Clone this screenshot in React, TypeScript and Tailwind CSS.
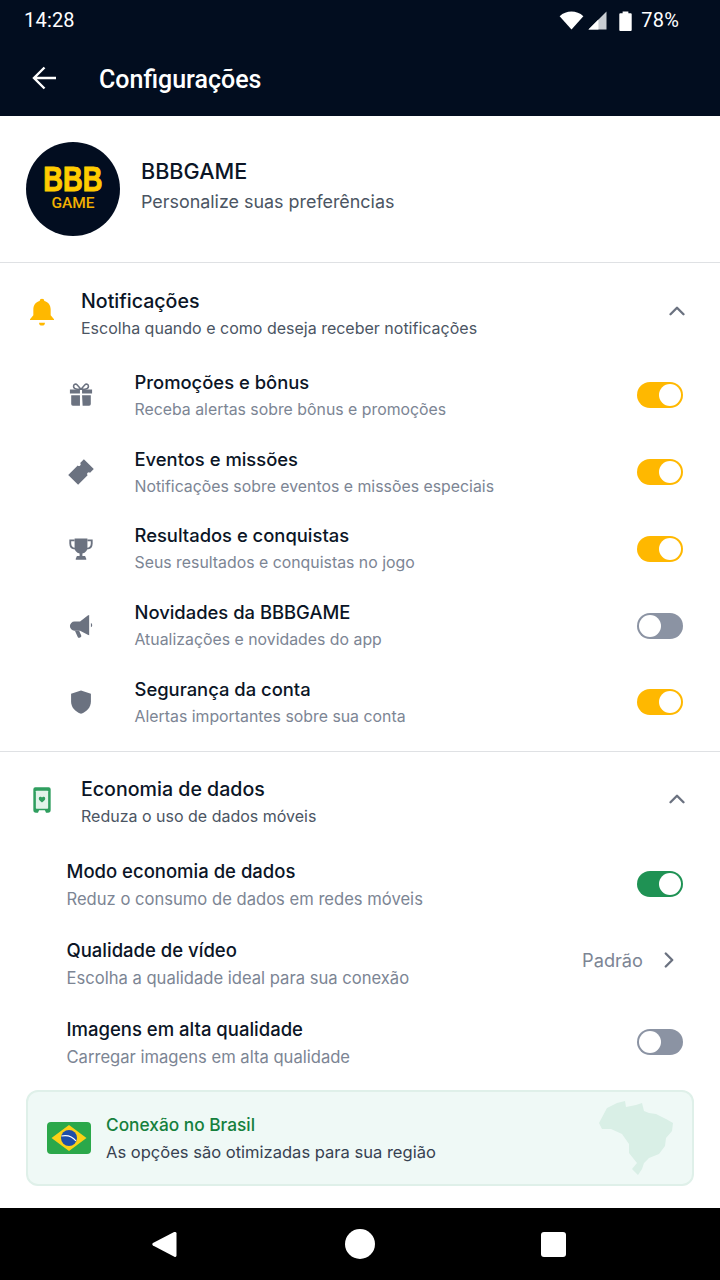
import { ChevronRight, ChevronUp } from 'lucide-react';

const notificationRows = [
  { icon: 'gift', title: 'Promoções e bônus', sub: 'Receba alertas sobre bônus e promoções', on: true },
  { icon: 'ticket', title: 'Eventos e missões', sub: 'Notificações sobre eventos e missões especiais', on: true },
  { icon: 'trophy', title: 'Resultados e conquistas', sub: 'Seus resultados e conquistas no jogo', on: true },
  { icon: 'megaphone', title: 'Novidades da BBBGAME', sub: 'Atualizações e novidades do app', on: false },
  { icon: 'shield', title: 'Segurança da conta', sub: 'Alertas importantes sobre sua conta', on: true },
];

const dataRows = [
  { title: 'Modo economia de dados', sub: 'Reduz o consumo de dados em redes móveis' },
  { title: 'Qualidade de vídeo', sub: 'Escolha a qualidade ideal para sua conexão' },
  { title: 'Imagens em alta qualidade', sub: 'Carregar imagens em alta qualidade' },
];

function RowIcon({ name }: { name: string }) {
  const cls = 'w-[28px] h-[28px] text-[#6b7280]';
  if (name === 'gift') {
    return (
      <svg viewBox="0 0 24 24" className={cls} fill="currentColor">
        <path d="M2.500 7.200h8.600v3.600H2.500zM12.900 7.200h8.600v3.600h-8.600zM3.600 12.200h7.500v9H5a1.400 1.400 0 0 1-1.400-1.400zM12.900 12.200h7.500v7.600a1.400 1.400 0 0 1-1.400 1.400h-5.600z" />
        <path d="M12 7 8.600 3.200c-1-1-3-.4-3 1.200 0 1.400 1.200 2.400 3 2.600zM12 7l3.400-3.800c1-1 3-.4 3 1.200 0 1.400-1.200 2.400-3 2.600z" fill="none" stroke="currentColor" strokeWidth="1.300" />
      </svg>
    );
  }
  if (name === 'ticket') {
    return (
      <svg viewBox="0 0 24 24" className={cls} fill="currentColor">
        <path transform="rotate(-45 12 12)" d="M2.500 6h11.500a1.500 1.500 0 0 0 3 0h4.500v12h-4.500a1.500 1.500 0 0 0-3 0H2.500z" />
      </svg>
    );
  }
  if (name === 'trophy') {
    return (
      <svg viewBox="0 0 24 24" className={cls} fill="currentColor">
        <path d="M6.500 3h11v7.500a5.500 5.500 0 0 1-4.300 5.300V18h2.300l1 2.400v.8H7.500v-.8l1-2.400h2.300v-2.200a5.500 5.500 0 0 1-4.300-5.300z" />
        <path d="M6.500 4.600H2.800v2.600c0 2.500 1.700 4.300 4.200 4.500M17.500 4.600h3.700v2.600c0 2.500-1.700 4.300-4.200 4.500" fill="none" stroke="currentColor" strokeWidth="1.600" />
      </svg>
    );
  }
  if (name === 'megaphone') {
    return (
      <svg viewBox="0 0 24 24" className={cls} fill="currentColor">
        <path d="M19 2.500v17.500l-1.200-.4-6.600-3.600H6.400a3.900 3.900 0 0 1 0-7.800h4.800l6.600-5.300z" />
        <path d="M6.800 16h3.600l1.800 4.200a1.200 1.200 0 0 1-.6 1.500l-.7.300a1.300 1.300 0 0 1-1.700-.6zM20.500 9.500a2 2 0 0 1 0 3.600z" />
      </svg>
    );
  }
  return (
    <svg viewBox="0 0 24 24" className={cls} fill="currentColor">
      <path d="M12 2.200 20.500 5v6.500c0 5-3.500 8.800-8.500 10.500-5-1.700-8.500-5.500-8.500-10.500V5z" />
    </svg>
  );
}

function Toggle({ on, color = 'bg-[#ffb800]' }: { on: boolean; color?: string }) {
  return (
    <div className={`w-[46px] h-[26px] rounded-full flex items-center px-[2px] ${on ? `${color} justify-end` : 'bg-[#8b93a3] justify-start'}`}>
      <div className="w-[22px] h-[22px] rounded-full bg-white" />
    </div>
  );
}

function SectionHeader({ icon, title, sub }: { icon: React.ReactNode; title: string; sub: string }) {
  return (
    <div className="flex items-start pl-[26px] pr-[30px] h-[93px] pt-[24px]">
      <div className="w-[55px] shrink-0 pt-[8px]">{icon}</div>
      <div className="flex-1">
        <div className="text-[19.600px] leading-[26px] font-medium text-[#0b1526]">{title}</div>
        <div className="text-[16px] leading-[24px] mt-[2px] text-[#4b5563]">{sub}</div>
      </div>
      <ChevronUp className="w-[26px] h-[26px] mt-[10px] text-[#6b7280]" strokeWidth={2.200} />
    </div>
  );
}

export default function App() {
  return (
    <div className="w-[720px] h-[1280px] overflow-hidden bg-white flex flex-col font-['Inter',sans-serif]">
      <div className="bg-[#020d1f] h-[116px] shrink-0 text-white">
        <div className="h-[40px] flex items-center justify-between pl-[24px] pr-[41px] font-['Roboto',sans-serif] text-[20px] tracking-[0.2px]">
          <span>14:28</span>
          <div className="flex items-center">
            <svg viewBox="0 0 26 20" className="w-[25px] h-[19px]" fill="white">
              <path d="M0.500 5.500C4 2 8.500 0.500 13 0.500S22 2 25.500 5.500L13 19.500z" />
            </svg>
            <svg viewBox="0 0 20 20" className="w-[19px] h-[19px] ml-[4px]" fill="none">
              <path d="M19.500 0.500V19.500H0.500z" fill="#c9cdd2" />
              <path d="M11 9V19.500H0.500z" fill="white" />
            </svg>
            <svg viewBox="0 0 14 22" className="w-[15px] h-[21px] ml-[11px]" fill="white">
              <path d="M4 1.500h6v2h2.500a1 1 0 0 1 1 1V21a1 1 0 0 1-1 1H1.500a1 1 0 0 1-1-1V4.500a1 1 0 0 1 1-1H4z" />
            </svg>
            <span className="ml-[8px]">78%</span>
          </div>
        </div>
        <div className="h-[76px] flex items-center pl-[32px]">
          <svg viewBox="0 0 24 24" className="w-[24px] h-[24px]" fill="none" stroke="white" strokeWidth="2.400">
            <path d="M24 12H2M12.500 1.500 2 12l10.500 10.500" />
          </svg>
          <span className="ml-[43px] font-['Roboto',sans-serif] font-medium text-[25px] mt-[3px] text-white">Configurações</span>
        </div>
      </div>

      <div className="h-[147px] shrink-0 border-b border-[#dfe1e4] flex items-center pl-[26px]">
        <div className="w-[94px] h-[94px] rounded-full bg-[#020d20] flex flex-col items-center justify-center">
          <span className="font-['Liberation_Sans',sans-serif] font-bold text-[35px] leading-[28px] mt-[-2px] text-[#ffcc00] scale-x-[0.78] [-webkit-text-stroke:1px_#ffcc00]">BBB</span>
          <span className="font-['Roboto',sans-serif] font-medium text-[15.500px] leading-[15px] mt-[3px] text-[#f2b000]">GAME</span>
        </div>
        <div className="ml-[21px] mb-[6px]">
          <div className="text-[21.600px] leading-[28px] font-medium text-[#0b1526]">BBBGAME</div>
          <div className="text-[17.900px] leading-[26px] mt-[4px] text-[#4b5563]">Personalize suas preferências</div>
        </div>
      </div>

      <div className="pt-[1px]">
        <SectionHeader
          title="Notificações"
          sub="Escolha quando e como deseja receber notificações"
          icon={
            <svg viewBox="0 0 24 24" className="w-[32px] h-[32px]" fill="#ffb800">
              <path d="M12 2a1.800 1.800 0 0 1 1.800 1.700c3 .8 4.700 3.300 4.700 6.300v4.500l2.500 3v.5H3v-.5l2.500-3V10c0-3 1.700-5.500 4.700-6.300A1.800 1.800 0 0 1 12 2zM9.800 20h4.400a2.200 2.200 0 0 1-4.400 0z" />
            </svg>
          }
        />
        <div>
          {notificationRows.map((row) => (
            <div key={row.title} className="h-[76.750px] flex items-center pl-[67px] pr-[37px]">
              <div className="w-[67.500px] shrink-0"><RowIcon name={row.icon} /></div>
              <div className="flex-1">
                <div className="text-[18.400px] leading-[26px] font-medium text-[#0b1526]">{row.title}</div>
                <div className="text-[15.850px] leading-[24px] mt-[3px] text-[#7c8594]">{row.sub}</div>
              </div>
              <Toggle on={row.on} />
            </div>
          ))}
        </div>
      </div>

      <div className="h-[1px] bg-[#dfe1e4] mt-[10px] shrink-0" />

      <SectionHeader
        title="Economia de dados"
        sub="Reduza o uso de dados móveis"
        icon={
          <svg viewBox="0 0 24 24" className="w-[32px] h-[32px]" fill="none">
            <path d="M7 2.500h10a1.500 1.500 0 0 1 1.500 1.500v15.500a2 2 0 0 1-2 2h-1.500l-.8-1.800h-4.400L9 21.500H7.500a2 2 0 0 1-2-2V4A1.500 1.500 0 0 1 7 2.500z" fill="#2f9e5f" />
            <rect x="7.400" y="5" width="9.200" height="13.500" rx="0.500" fill="#e2f3ea" />
            <path d="M12 13.800c-1.800-1.300-2.400-2.100-2.400-3a1.300 1.300 0 0 1 2.400-.7 1.300 1.300 0 0 1 2.400.7c0 .9-.6 1.700-2.400 3z" fill="#2f9e5f" />
          </svg>
        }
      />

      <div className="pl-[66.500px] pr-[37px]">
        {dataRows.map((row, i) => (
          <div key={row.title} className="h-[79px] flex items-center">
            <div className="flex-1">
              <div className="text-[18.500px] leading-[26px] font-medium text-[#0b1526]">{row.title}</div>
              <div className="text-[16.600px] leading-[24px] mt-[3px] text-[#7c8594]">{row.sub}</div>
            </div>
            {i === 0 && <Toggle on color="bg-[#1f9254]" />}
            {i === 1 && (
              <div className="flex items-center text-[#7c8594] text-[18.200px] mb-[6px] mr-[1px]">
                <span>Padrão</span>
                <ChevronRight className="w-[26px] h-[26px] ml-[13px] text-[#6b7280]" strokeWidth={2.200} />
              </div>
            )}
            {i === 2 && <Toggle on={false} />}
          </div>
        ))}
      </div>

      <div className="mx-[26px] mt-[8px] h-[96px] shrink-0 rounded-[12px] border-2 border-[#dff0e9] bg-[#eff9f6] flex items-center pl-[19px] pr-[18px]">
        <svg viewBox="0 0 44 32" className="w-[44px] h-[32px] shrink-0">
          <rect width="44" height="32" rx="4" fill="#2ba84a" />
          <path d="M22 3 39.500 16 22 29 4.500 16z" fill="#fcd116" />
          <circle cx="22" cy="16" r="8" fill="#1e4ea8" />
          <path d="M14.500 14c5-1 11 .5 14.500 5" fill="none" stroke="white" strokeWidth="1.200" />
        </svg>
        <div className="ml-[15px] flex-1 pt-[2px]">
          <div className="text-[17.300px] leading-[24px] font-medium text-[#15803d]">Conexão no Brasil</div>
          <div className="text-[16.550px] leading-[24px] mt-[3px] text-[#374151]">As opções são otimizadas para sua região</div>
        </div>
        <svg viewBox="0 0 75 76" className="w-[75px] h-[76px] shrink-0" fill="#d9efe6">
          <path d="M0 23 8 8l10-5 8-2 1 6 10-2 6-2 2 8 5 2 7 1 10 5 7 4-1 8-6 7-1 8-6 8-10 4-5 5-2 6-4 6-6-6 5-6-8-10v-9l-7-10-11-5H3z" />
        </svg>
      </div>

      <div className="flex-1" />

      <div className="h-[72px] shrink-0 bg-black flex items-center justify-between pl-[152px] pr-[154px]">
        <svg viewBox="0 0 26 28" className="w-[25px] h-[27px]" fill="white">
          <path d="M24 1a1.500 1.500 0 0 1 1.500 1.500v23a1.500 1.500 0 0 1-2.200 1.300L1 15a1.500 1.500 0 0 1 0-2.500L23 1.100z" />
        </svg>
        <div className="w-[30px] h-[30px] rounded-full bg-white ml-[2px]" />
        <div className="w-[25px] h-[25px] rounded-[3px] bg-white" />
      </div>
    </div>
  );
}
